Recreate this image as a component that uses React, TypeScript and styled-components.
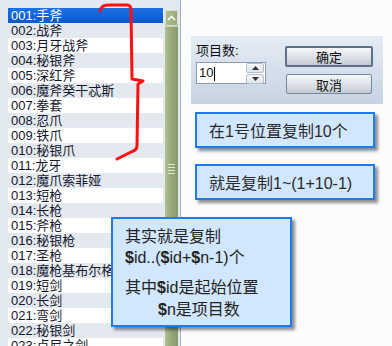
import styled, { createGlobalStyle } from 'styled-components';

const GlobalStyle = createGlobalStyle`
  html, body {
    margin: 0;
    padding: 0;
  }
  body {
    width: 392px;
    height: 346px;
    overflow: hidden;
    background: #fbfcfd;
    font-family: "Liberation Sans", "Noto Sans CJK SC", sans-serif;
  }
`;

const Screen = styled.div`
  position: relative;
  display: flex;
  width: 392px;
  height: 346px;
  overflow: hidden;
`;

const LeftPane = styled.div`
  display: flex;
  align-items: flex-start;
  gap: 2px;
  width: 181px;
  box-sizing: border-box;
  padding: 8px 0 0 8px;
  background: #e2e9f1;
  border-right: 1px solid #a3afbd;
`;

const List = styled.ul`
  list-style: none;
  margin: 0;
  padding: 0;
  width: 155px;
`;

const Row = styled.li<{ $alt: boolean; $selected?: boolean }>`
  height: 15px;
  line-height: 15px;
  padding-left: 3px;
  font-size: 13px;
  white-space: nowrap;
  overflow: hidden;
  color: ${(p) => (p.$selected ? '#ffffff' : '#14162a')};
  background: ${(p) =>
    p.$selected
      ? 'linear-gradient(#1a72e6, #0a58cc)'
      : p.$alt
      ? '#e4e9f0'
      : '#ffffff'};
`;

const ScrollBar = styled.div`
  display: flex;
  flex-direction: column;
  width: 13px;
  height: 360px;
  margin-top: 2px;
  border-radius: 2px;
  background: linear-gradient(90deg, #b3c196, #9aac7a 40%, #889a68);
`;

const ArrowButton = styled.div`
  display: flex;
  align-items: center;
  justify-content: center;
  height: 14px;
  border: 1px solid #d9e2c8;
  border-radius: 2px;
  background: linear-gradient(90deg, #aebd90, #98aa78);
`;

const Thumb = styled.div`
  flex: 1;
  display: flex;
  flex-direction: column;
  align-items: center;
  padding-top: 137px;
  gap: 2px;
  border-top: 1px solid #c5d1ad;
`;

const Grip = styled.span`
  width: 7px;
  height: 1px;
  background: #dfe8cc;
`;

const RightPane = styled.div`
  flex: 1;
  display: flex;
  flex-direction: column;
  align-items: flex-start;
  padding: 36px 0 0 10px;
`;

const Dialog = styled.div`
  display: flex;
  justify-content: space-between;
  width: 192px;
  height: 68px;
  box-sizing: border-box;
  padding: 6px 10px 0 5px;
  background: linear-gradient(#e4ecf6, #c7d3e1);
`;

const Field = styled.div`
  display: flex;
  flex-direction: column;
  gap: 2px;
`;

const Label = styled.div`
  font-size: 13px;
  line-height: 18px;
  color: #111;
`;

const Input = styled.div`
  display: flex;
  align-items: center;
  justify-content: space-between;
  width: 70px;
  height: 22px;
  box-sizing: border-box;
  padding: 0 1px 0 2px;
  background: #fff;
  border: 1px solid #8a9bb2;
  font-size: 13px;
  color: #111;
`;

const Caret = styled.span`
  display: inline-block;
  width: 1px;
  height: 14px;
  margin-left: 1px;
  vertical-align: middle;
  background: #000;
`;

const Spin = styled.div`
  display: flex;
  flex-direction: column;
  gap: 1px;
`;

const SpinButton = styled.div`
  display: flex;
  align-items: center;
  justify-content: center;
  width: 16px;
  height: 8px;
  border: 1px solid #b4bfcd;
  border-radius: 2px;
  background: linear-gradient(#f7f9fb, #dfe5ec);
`;

const Buttons = styled.div`
  display: flex;
  flex-direction: column;
  gap: 7px;
  padding-top: 4px;
`;

const Button = styled.button<{ $default?: boolean }>`
  width: ${(p) => (p.$default ? '88px' : '86px')};
  height: ${(p) => (p.$default ? '21px' : '20px')};
  margin-left: ${(p) => (p.$default ? '0' : '1px')};
  padding: 0;
  font-family: "Noto Sans CJK SC", sans-serif;
  font-size: 13px;
  line-height: 1;
  color: #111;
  border: ${(p) => (p.$default ? '2px solid #5d6f8a' : '1px solid #7488a4')};
  border-radius: 2px;
  background: linear-gradient(#f6f7f9, #dadee4 60%, #c4c9d1);
`;

const Callout = styled.div<{ $top: number }>`
  width: 180px;
  height: 36px;
  margin: ${(p) => p.$top}px 0 0 4px;
  box-sizing: border-box;
  padding-left: 12px;
  display: flex;
  align-items: center;
  font-size: 16px;
  color: #2a2a2a;
  background: #d1e7fd;
  border: 2px solid #1c7cf4;
  box-shadow: 3px 3px 3px rgba(0, 0, 0, 0.45);
`;

const Note = styled.div`
  position: absolute;
  left: 111px;
  top: 217px;
  width: 181px;
  height: 110px;
  box-sizing: border-box;
  padding: 7px 0 0 12px;
  font-size: 16px;
  line-height: 21px;
  color: #222;
  background: #d1e7fd;
  border: 2px solid #1c7cf4;
  box-shadow: 3px 3px 3px rgba(0, 0, 0, 0.45);
`;

const NoteLine = styled.div<{ $indent?: number; $gap?: number }>`
  padding-left: ${(p) => p.$indent ?? 0}px;
  margin-top: ${(p) => p.$gap ?? 0}px;
  white-space: nowrap;
`;

const Dollar = styled.b`
  font-weight: 700;
`;

const Scribble = styled.svg`
  position: absolute;
  left: 0;
  top: 0;
  pointer-events: none;
`;

const items = [
  '手斧', '战斧', '月牙战斧', '秘银斧', '深红斧', '魔斧癸干忒斯', '拳套', '忍爪',
  '铁爪', '秘银爪', '龙牙', '魔爪索菲娅', '短枪', '长枪', '斧枪', '秘银枪',
  '圣枪', '魔枪基布尔格', '短剑', '长剑', '弯剑', '秘银剑', '卢尼之剑',
];

const D = () => <Dollar>$</Dollar>;

const App = () => {
  return (
    <>
      <GlobalStyle />
      <Screen>
        <LeftPane>
          <List>
            {items.map((name, i) => (
              <Row key={i} $alt={i % 2 === 1} $selected={i === 0}>
                {String(i + 1).padStart(3, '0')}:{name}
              </Row>
            ))}
          </List>
          <ScrollBar>
            <ArrowButton>
              <svg width="9" height="6" viewBox="0 0 9 6">
                <path d="M1 5 L4.5 1.5 L8 5" fill="none" stroke="#ffffff" strokeWidth="1.6" />
              </svg>
            </ArrowButton>
            <Thumb>
              <Grip />
              <Grip />
              <Grip />
              <Grip />
            </Thumb>
          </ScrollBar>
        </LeftPane>

        <RightPane>
          <Dialog>
            <Field>
              <Label>项目数:</Label>
              <Input>
                <span>
                  10<Caret />
                </span>
                <Spin>
                  <SpinButton>
                    <svg width="7" height="4" viewBox="0 0 7 4">
                      <path d="M0 4 L3.5 0 L7 4 Z" fill="#333" />
                    </svg>
                  </SpinButton>
                  <SpinButton>
                    <svg width="7" height="4" viewBox="0 0 7 4">
                      <path d="M0 0 L3.5 4 L7 0 Z" fill="#333" />
                    </svg>
                  </SpinButton>
                </Spin>
              </Input>
            </Field>
            <Buttons>
              <Button $default>确定</Button>
              <Button>取消</Button>
            </Buttons>
          </Dialog>
          <Callout $top={8}>在1号位置复制10个</Callout>
          <Callout $top={16}>就是复制1~(1+10-1)</Callout>
        </RightPane>

        <Note>
          <NoteLine>其实就是复制</NoteLine>
          <NoteLine>
            <D />id..(<D />id+<D />n-1)个
          </NoteLine>
          <NoteLine $gap={9}>
            其中<D />id是起始位置
          </NoteLine>
          <NoteLine $indent={33} $gap={1}>
            <D />n是项目数
          </NoteLine>
        </Note>

        <Scribble width="392" height="346" viewBox="0 0 392 346">
          <path
            d="M100 11 C101 6 104 5 110 5 L127 5 C130 5 131 7 131 10 L132 79 L143 81 L138 84 L137 146 C137 150 134 151 131 152 L117 159"
            fill="none"
            stroke="#ff1010"
            strokeWidth="3"
            strokeLinejoin="round"
            strokeLinecap="round"
          />
        </Scribble>
      </Screen>
    </>
  );
};

export default App;
